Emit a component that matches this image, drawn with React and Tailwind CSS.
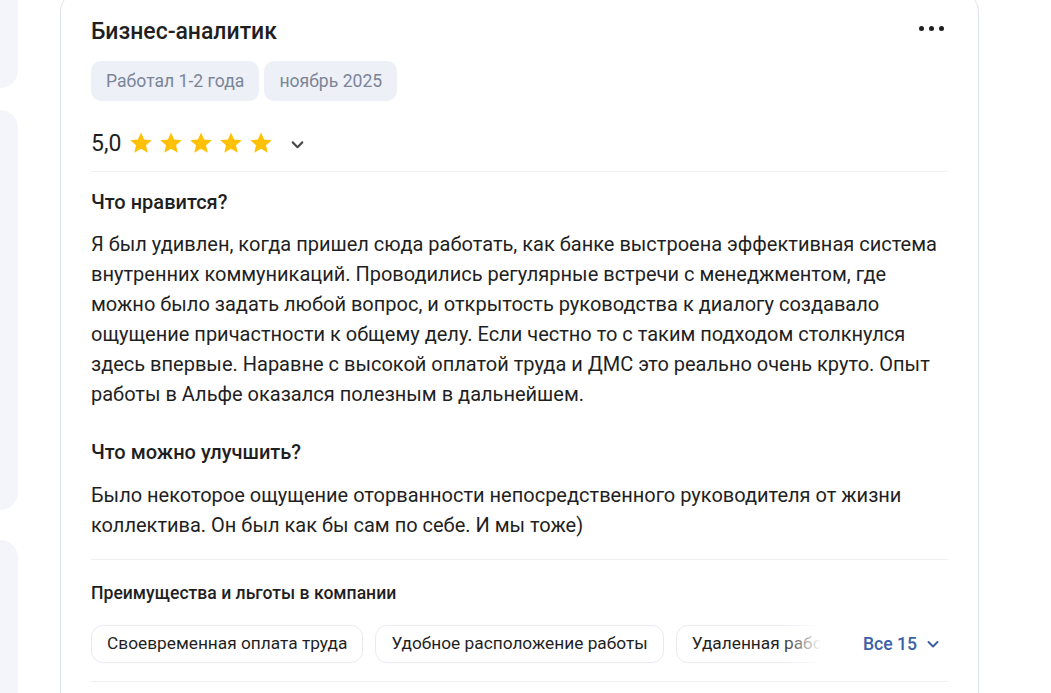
import React from 'react';

const likes = [
  'Я был удивлен, когда пришел сюда работать, как банке выстроена эффективная система',
  'внутренних коммуникаций. Проводились регулярные встречи с менеджментом, где',
  'можно было задать любой вопрос, и открытость руководства к диалогу создавало',
  'ощущение причастности к общему делу. Если честно то с таким подходом столкнулся',
  'здесь впервые. Наравне с высокой оплатой труда и ДМС это реально очень круто. Опыт',
  'работы в Альфе оказался полезным в дальнейшем.',
];

const improve = [
  'Было некоторое ощущение оторванности непосредственного руководителя от жизни',
  'коллектива. Он был как бы сам по себе. И мы тоже)',
];

const benefits = ['Своевременная оплата труда', 'Удобное расположение работы', 'Удаленная работа', 'ДМС'];

function Star() {
  return (
    <svg width="26" height="26" viewBox="0 0 24 24">
      <path
        d="M12 2.2l2.9 6.6 7.1.6-5.4 4.7 1.6 7-6.2-3.7-6.2 3.7 1.6-7L2 9.4l7.1-.6z"
        fill="#ffc107"
      />
    </svg>
  );
}

function Chevron({ color = '#4a4a4a', size = 16 }) {
  return (
    <svg width={size} height={size} viewBox="0 0 16 16" fill="none">
      <path d="M3.5 6l4.5 4.5L12.5 6" stroke={color} strokeWidth="2" strokeLinecap="round" strokeLinejoin="round" />
    </svg>
  );
}

export default function App() {
  return (
    <div className="flex h-[693px] w-[1051px] overflow-hidden bg-white font-['Roboto',sans-serif] text-[#1f1f1f]">
      {/* sidebar cards, cut off by the viewport */}
      <div className="flex w-[18px] shrink-0 flex-col">
        <div className="-mt-[20px] h-[108px] shrink-0 rounded-br-[22px] bg-[#f3f5fa]" />
        <div className="mt-[22px] h-[400px] shrink-0 rounded-r-[22px] bg-[#f3f5fa]" />
        <div className="mt-[30px] h-[200px] shrink-0 rounded-tr-[22px] bg-[#f3f5fa]" />
      </div>

      <div className="ml-[42px] -mt-[10px] h-[760px] w-[919px] shrink-0 rounded-[22px] border border-[#dfe3ea] px-[30px] pt-[26px]">
        <div className="flex items-start justify-between">
          <h2 className="text-[23px] font-medium leading-[30px]">Бизнес-аналитик</h2>
          <div className="mr-[4px] mt-[9px] flex gap-[5px]">
            <span className="h-[5px] w-[5px] rounded-full bg-[#1f1f1f]" />
            <span className="h-[5px] w-[5px] rounded-full bg-[#1f1f1f]" />
            <span className="h-[5px] w-[5px] rounded-full bg-[#1f1f1f]" />
          </div>
        </div>

        <div className="mt-[14px] flex gap-[5px]">
          <span className="flex h-[40px] items-center rounded-[10px] bg-[#edf0f7] px-[15px] text-[17.6px] text-[#7b8597]">
            Работал 1-2 года
          </span>
          <span className="flex h-[40px] items-center rounded-[10px] bg-[#edf0f7] px-[15px] text-[17.6px] text-[#7b8597]">
            ноябрь 2025
          </span>
        </div>

        <div className="mt-[24px] flex h-[36px] items-center">
          <span className="text-[23px] leading-none">5,0</span>
          <div className="ml-[7px] flex gap-[4px]">
            <Star />
            <Star />
            <Star />
            <Star />
            <Star />
          </div>
          <span className="ml-[15px] mt-[2px]">
            <Chevron size={17} />
          </span>
        </div>

        <div className="mt-[10px] h-px bg-[#eef0f4]" />

        <h3 className="mt-[15px] text-[20px] font-medium leading-[30px]">Что нравится?</h3>
        <p className="mt-[12px] whitespace-nowrap text-[20px] leading-[30px]">
          {likes.map((l, i) => (
            <span key={i} className="block">{l}</span>
          ))}
        </p>

        <h3 className="mt-[28px] text-[20px] font-medium leading-[30px]">Что можно улучшить?</h3>
        <p className="mt-[13px] whitespace-nowrap text-[20px] leading-[30px]">
          {improve.map((l, i) => (
            <span key={i} className="block">{l}</span>
          ))}
        </p>

        <div className="mt-[19px] h-px bg-[#eef0f4]" />

        <h4 className="mt-[21px] text-[17.6px] font-medium leading-[24px]">Преимущества и льготы в компании</h4>

        <div className="mt-[20px] flex items-center">
          <div className="relative w-[730px] overflow-hidden">
            <div className="flex gap-[12px]">
              {benefits.map((b) => (
                <span
                  key={b}
                  className="flex h-[38px] shrink-0 items-center whitespace-nowrap rounded-[12px] border border-[#e8ebf2] px-[15px] text-[17.3px]"
                >
                  {b}
                </span>
              ))}
            </div>
            <div className="absolute right-0 top-0 h-full w-[40px] bg-gradient-to-r from-white/0 to-white" />
          </div>
          <button className="ml-[42px] flex items-center gap-[8px] whitespace-nowrap text-[17.6px] font-medium text-[#3b62a6]">
            Все 15
            <Chevron color="#3b62a6" />
          </button>
        </div>

        <div className="mt-[18px] h-px bg-[#eef0f4]" />
      </div>
    </div>
  );
}
